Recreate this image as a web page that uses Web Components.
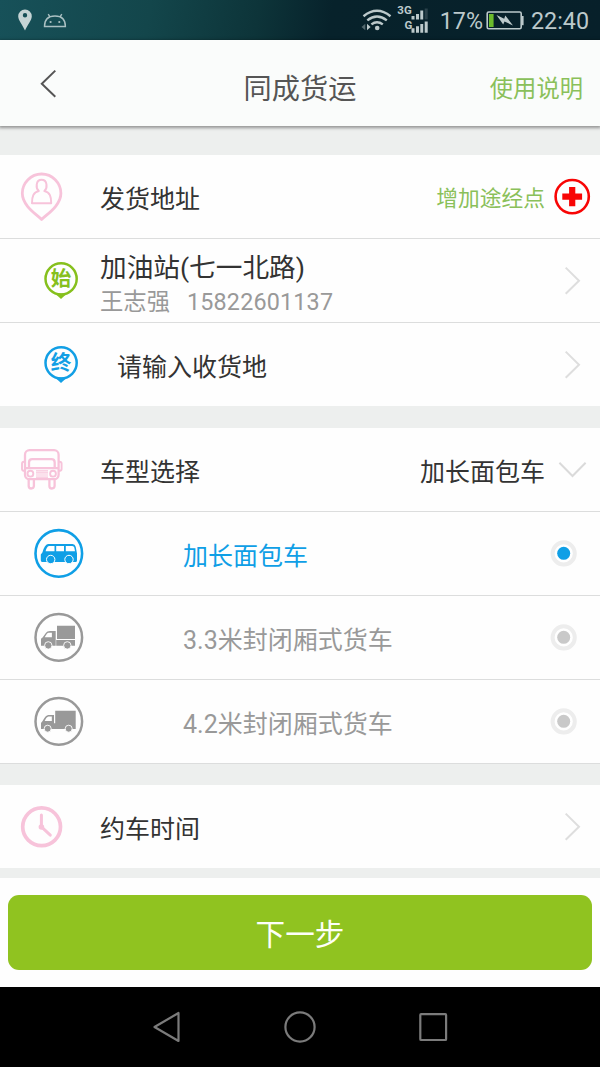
<!DOCTYPE html>
<html lang="zh-CN">
<head>
<meta charset="utf-8">
<title>同成货运</title>
<style>
  html, body { margin: 0; padding: 0; }
  body { width: 600px; height: 1067px; overflow: hidden; background: #edefee; font-family: Roboto, "Noto Sans CJK SC", sans-serif; }
</style>
</head>
<body>
<freight-app></freight-app>
<script>
const define = (name, html) => {
  const template = document.createElement('template');
  template.innerHTML = html;
  customElements.define(name, class extends HTMLElement {
    constructor() {
      super();
      this.attachShadow({ mode: 'open' }).append(template.content.cloneNode(true));
    }
  });
};

/* Icons share the row's height, so each one is drawn in row coordinates. */
const ICONS = {
  address: [100, `<g fill="none" stroke="#f7c3da" stroke-linejoin="round"><path stroke-width="2.8" d="M41.6 64.4C36 59 22.3 50.5 22.3 38.3A19.3 19.3 0 0 1 60.9 38.3C60.9 50.5 47.2 59 41.6 64.4Z"/><path stroke-width="2" d="M38.8 36C35.6 33 35.6 24.8 41.6 24.8S47.6 33 44.4 36C50 37.4 51.2 41.5 51.2 48.2H32C32 41.5 33.2 37.4 38.8 36Z"/></g>`],
  truck: [100, `<g fill="none" stroke="#f7c3da" stroke-width="2.3"><rect x="25" y="22.2" width="33.6" height="29" rx="4.5"/><path d="M29 40.2V34.5Q29 31.2 32.3 31.2H51.4Q54.7 31.2 54.7 34.5V40.2M25 40.2H58.6"/><path d="M25 33.7H24Q22 33.7 22 35.7V41Q22 43 25 43M58.6 33.7H59.6Q61.6 33.7 61.6 35.7V41Q61.6 43 58.6 43" stroke-width="1.9"/><circle cx="30.4" cy="45.7" r="2.9" stroke-width="1.9"/><circle cx="53" cy="45.7" r="2.9" stroke-width="1.9"/><path stroke-width="1.2" d="M36 42.8H48M36 44.9H48M36 47H48M36 49.2H48"/><path d="M28.7 51.2V58Q28.7 60.5 31.2 60.5T33.9 58V51.2M49.4 51.2V58Q49.4 60.5 51.9 60.5T54.6 58V51.2"/></g>`],
  clock: [100, `<circle cx="41.6" cy="41.8" r="18.9" fill="none" stroke="#f7c3da" stroke-width="3.7"/><path d="M41.4 30V41.9L50.3 50.2" fill="none" stroke="#f7c3da" stroke-width="3" stroke-linecap="round"/><circle cx="41.4" cy="42" r="2.8" fill="#f7c3da"/>`],
  van: [100, `<circle cx="58.8" cy="41.4" r="23.3" fill="none" stroke="#0f9fe6" stroke-width="2.6"/><path fill="#0f9fe6" d="M48 32H72.5Q75 32 75.7 34.8L77 41.5V48.5Q77 50 75.5 50H42.5Q41 50 40.8 48.5V42.5L42.4 40.5Q44.5 32.6 48 32Z"/><path fill="#fff" d="M49 33.9H54.5V39.2H45.6Q46.6 34.6 49 33.9ZM56.2 33.9H64V39.2H56.2ZM65.8 33.9H72.2Q74 33.9 74.3 35.6L75 39.2H65.8Z"/><g fill="#0f9fe6" stroke="#fff"><circle cx="50.7" cy="47.5" r="4.2"/><circle cx="69" cy="47.5" r="4.2"/></g>`],
  box: [100, `<circle cx="58.8" cy="41.4" r="23.3" fill="none" stroke="#999" stroke-width="2.5"/><path fill="#999" d="M57 29.8H75V42.9H57ZM56.2 44H75V49.8H56.2ZM55.7 35H50Q47 35 46 36.7L42.8 41.2L41 42.8V49.8H55.7Z"/><path fill="#fff" d="M48.6 36.7H51.9V41.3H44.7Q46.8 36.9 48.6 36.7Z"/><g fill="#999" stroke="#fff" stroke-width=".9"><circle cx="48.3" cy="49.4" r="3.7"/><circle cx="67.3" cy="49.4" r="3.7"/></g>`],
  lorry: [100, `<circle cx="58.8" cy="41.4" r="23.3" fill="none" stroke="#999" stroke-width="2.5"/><path fill="#999" d="M55.2 30.7H75.7V49H41V43L42.6 41Q45.6 35 48.4 35H54V43.3H55.2Z"/><path fill="#fff" d="M48.5 36.4H51.8V41H44.7Q46.4 36.7 48.5 36.4Z"/><g fill="#999" stroke="#fff" stroke-width=".9"><circle cx="47.7" cy="48.7" r="3.5"/><circle cx="68.7" cy="48.7" r="3.5"/></g>`],
  right: [40, `<path d="M5.7 28.6L19 41.7L5.7 54.8" fill="none" stroke="#dedede" stroke-width="2"/>`],
  down: [55, `<path d="M14.4 34.8L27.5 48L40.6 34.8" fill="none" stroke="#dadada" stroke-width="2"/>`],
  plus: [55, `<circle cx="27.2" cy="41.6" r="16.6" fill="none" stroke="#f80505" stroke-width="2.6"/><path d="M17.3 41.6H37.1M27.2 32V51.2" stroke="#f80505" stroke-width="6.2"/>`],
  radio: [55, `<circle cx="18.7" cy="41.4" r="11.1" fill="#fff" stroke="#ededed" stroke-width="4"/><circle cx="18.7" cy="41.3" r="6.5" fill="currentColor"/>`]
};

customElements.define('row-icon', class extends HTMLElement {
  constructor() {
    super();
    const [w, shapes] = ICONS[this.getAttribute('name')];
    this.attachShadow({ mode: 'open' }).innerHTML =
      `<style>:host{display:block;flex:none;width:${w}px;height:83px}svg{display:block}</style>
       <svg width="${w}" height="83" viewBox="0 0 ${w} 83">${shapes}</svg>`;
  }
});

define('pin-mark', `<style>
  :host { display: grid; flex: none; width: 100px; height: 83px; }
  svg, div { grid-area: 1 / 1; display: block; }
  div { width: 122px; padding-top: 26px; text-align: center; font-size: 20.5px; font-weight: 700; line-height: 29px; }
</style>
<svg width="100" height="83" viewBox="0 0 100 83"><circle cx="61.1" cy="39.8" r="15.6" fill="none" stroke="currentColor" stroke-width="2.5"/><path fill="currentColor" d="M55 54.5L61 60L67 54.5Z"/></svg>
<div><slot></slot></div>`);

define('list-row', `<style>
  :host { display: flex; height: 83px; align-items: center; background: #fefefe; color: #333; font-size: 25px; line-height: 36px; white-space: nowrap; }
  :host([line]) { border-bottom: 1px solid #dcdddd; }
  .body { flex: 1; padding-top: 6px; padding-left: var(--indent, 0); }
  .value { padding-top: var(--value-drop, 6px); font-size: var(--value-size, 25px); color: var(--value-color, inherit); }
</style>
<slot name="icon"></slot><div class="body"><slot></slot></div><div class="value"><slot name="value"></slot></div><slot name="end"></slot>`);

define('contact-card', `<style>
  :host { display: block; margin-top: 2px; }
  .place { font-size: 26.67px; line-height: 34px; }
  .person { display: flex; gap: 17px; font-size: 23.33px; line-height: 34px; color: #999; }
  .person ::slotted(*) { display: block; }
  slot[name=phone] { letter-spacing: .18px; }
</style>
<div class="place"><slot name="place"></slot></div>
<div class="person"><slot name="name"></slot><slot name="phone"></slot></div>`);

define('status-bar', `<style>
  :host { display: flex; height: 40px; align-items: center; box-sizing: border-box; color: #bcc9cb; font-size: 23.3px; line-height: 40px;
    background: linear-gradient(100deg, #175159 0%, #13464b 25%, #0d3439 43%, #07222b 55%, #07202a 100%); }
  svg { display: block; flex: none; }
  .gap { flex: 1; }
  .t { height: 40px; padding-top: 2px; }
  .time { width: 69px; }
  text { font: 700 11.5px Roboto, sans-serif; fill: currentColor; }
</style>
<svg width="80" height="40" viewBox="0 0 80 40"><path fill="#c5d4d5" fill-rule="evenodd" d="M25 9.5A6.7 6.7 0 0 1 31.8 16.2C31.8 20.5 27.5 24.5 25 30.5C22.5 24.5 18.2 20.5 18.2 16.2A6.7 6.7 0 0 1 25 9.5ZM25 13A2.2 2.2 0 1 0 25 17.4A2.2 2.2 0 0 0 25 13Z"/><g fill="none" stroke="#aac0c2" stroke-width="1.4"><path d="M44.5 26.5C44.5 19 49 16 55 16S65.4 19 65.4 26.5ZM50 16.8L48.2 14.1M60 16.8L61.8 14.1"/></g><g fill="#aac0c2"><circle cx="50.6" cy="22" r="1.1"/><circle cx="59.3" cy="22" r="1.1"/></g></svg>
<div class="gap"></div>
<svg width="80" height="40" viewBox="360 0 80 40"><g fill="none" stroke="currentColor" stroke-width="2.4"><path d="M363.5 16.2Q377 5.4 390.5 16.2M367.3 20.4Q377 12.6 386.8 20.4M371.4 24.4Q377 20 382.8 24.4"/></g><circle cx="377.2" cy="28" r="2.3" fill="currentColor"/><path fill="#53686e" d="M361.5 27L365.3 23.8V30.2Z"/><path fill="currentColor" d="M367 23.8L370.6 27L367 30.2Z"/><text x="397.3" y="14" textLength="14.4" lengthAdjust="spacingAndGlyphs">3G</text><text x="404.4" y="28.6">G</text><path fill="currentColor" d="M411.5 16H414.5V19.4H411.5ZM416 14H419V19.4H416ZM420.3 10.5H423.2V19.4H420.3ZM411.5 28.2H414.5V32.8H411.5ZM416 26.2H419V32.8H416ZM420.3 24H423.2V32.8H420.3ZM424.7 21.5H427.7V32.8H424.7Z"/><path fill="#2a414a" d="M424.7 8.5H427.7V19.4H424.7Z"/></svg>
<div class="t">17%</div>
<svg width="48" height="40" viewBox="483 0 48 40"><rect x="487.2" y="12" width="34" height="16.8" rx="1.5" fill="none" stroke="currentColor" stroke-width="1.6"/><path fill="currentColor" d="M521.5 16H523.6V25.2H521.5Z"/><path fill="#6cbb2c" d="M489 14H493.6V27H489Z"/><path fill="currentColor" d="M496.5 15L504.2 18.8L505.3 15.5L513 25.5L504.5 21.6L503.2 24.4Z"/></svg>
<div class="t time">22:40</div>`);

define('title-bar', `<style>
  :host { display: grid; grid-template-columns: 1fr auto 1fr; align-items: center; height: 86px; background: #fafcfb; position: relative; color: #555; box-shadow: 0 1px 3px 1px rgba(0,0,0,.38); }
  svg { display: block; }
  .title { font-size: 28.2px; line-height: 40px; padding-top: 13px; }
  .help { justify-self: end; padding: 12px 17px 0 0; font-size: 23.3px; line-height: 34px; color: #8ac05a; }
</style>
<svg width="80" height="86" viewBox="0 0 80 86"><path d="M55.3 30.6L41.8 43.7L55.3 56.8" fill="none" stroke="#555" stroke-width="2"/></svg>
<div class="title"><slot></slot></div>
<div class="help"><slot name="help"></slot></div>`);

define('primary-button', `<style>
  :host { display: block; padding: 17px 8px; height: 75px; background: #fefefe; }
  button { display: block; width: 100%; height: 75px; border: 0; border-radius: 11px; background: #90c320; color: #fdfff8; font: inherit; font-size: 29.6px; padding: 0 0 1px; }
</style><button><slot></slot></button>`);

define('nav-bar', `<style>
  :host { display: grid; grid-template-columns: 133px 133px 133px; justify-content: center; justify-items: center; height: 80px; background: #000; }
  svg { display: block; }
</style>
<svg width="60" height="80" viewBox="137 987 60 80"><path d="M154.5 1027L178.5 1013V1041Z" fill="none" stroke="#7b7b7b" stroke-width="2.2" stroke-linejoin="round"/></svg>
<svg width="60" height="80" viewBox="270 987 60 80"><circle cx="300" cy="1027" r="14.6" fill="none" stroke="#7b7b7b" stroke-width="2.2"/></svg>
<svg width="60" height="80" viewBox="403 987 60 80"><rect x="420.3" y="1014.2" width="25.8" height="25.8" rx=".8" fill="none" stroke="#7b7b7b" stroke-width="2.2"/></svg>`);

define('freight-app', `<style>
  :host { display: block; width: 600px; height: 1067px; }
  section { display: block; }
  .addresses { margin-top: 29px; }
  .vehicles { margin-top: 22px; }
  .schedule { margin: 21px 0 10px; }
  .add { --value-size: 21.75px; --value-color: #8ac05a; --value-drop: 4px; }
  .to { --indent: 17px; }
  .option { --indent: 83px; color: #999; }
  .option row-icon[name=radio] { color: #c9c9c9; }
  .option.on, .option.on row-icon[name=radio] { color: #0f9fe6; }
  .start { color: #86c01d; }
  .end { color: #129fe5; }
</style>
<status-bar></status-bar>
<title-bar>同成货运<span slot="help">使用说明</span></title-bar>
<section class="addresses">
  <list-row line class="add"><row-icon slot="icon" name="address"></row-icon>发货地址<span slot="value">增加途经点</span><row-icon slot="end" name="plus"></row-icon></list-row>
  <list-row line><pin-mark slot="icon" class="start">始</pin-mark><contact-card><span slot="place">加油站(七一北路)</span><span slot="name">王志强</span><span slot="phone">15822601137</span></contact-card><row-icon slot="end" name="right"></row-icon></list-row>
  <list-row class="to"><pin-mark slot="icon" class="end">终</pin-mark>请输入收货地<row-icon slot="end" name="right"></row-icon></list-row>
</section>
<section class="vehicles">
  <list-row line><row-icon slot="icon" name="truck"></row-icon>车型选择<span slot="value">加长面包车</span><row-icon slot="end" name="down"></row-icon></list-row>
  <list-row line class="option on"><row-icon slot="icon" name="van"></row-icon>加长面包车<row-icon slot="end" name="radio"></row-icon></list-row>
  <list-row line class="option"><row-icon slot="icon" name="box"></row-icon>3.3米封闭厢式货车<row-icon slot="end" name="radio"></row-icon></list-row>
  <list-row line class="option"><row-icon slot="icon" name="lorry"></row-icon>4.2米封闭厢式货车<row-icon slot="end" name="radio"></row-icon></list-row>
</section>
<section class="schedule">
  <list-row><row-icon slot="icon" name="clock"></row-icon>约车时间<row-icon slot="end" name="right"></row-icon></list-row>
</section>
<primary-button>下一步</primary-button>
<nav-bar></nav-bar>`);
</script>
</body>
</html>
